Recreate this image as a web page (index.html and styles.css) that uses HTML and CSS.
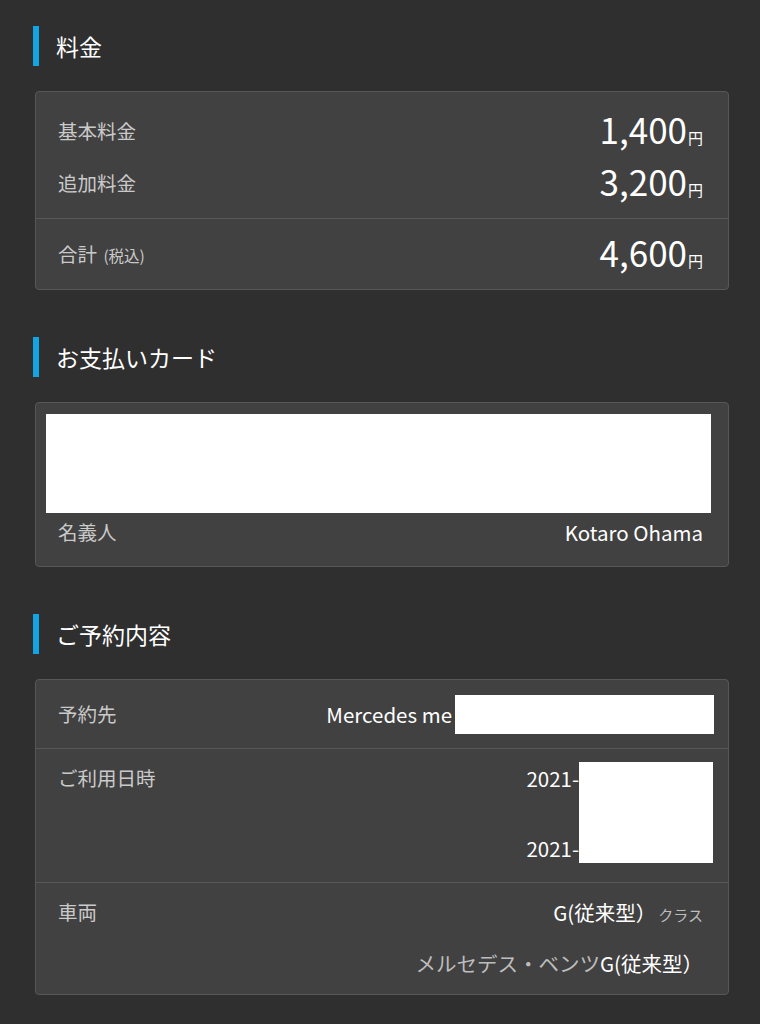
FILE: index.html
```html
<!DOCTYPE html>
<html lang="ja">
  <head>
    <meta charset="UTF-8">
    <title>ご予約内容</title>
    <link rel="stylesheet" href="styles.css">
  </head>
  <body>
    <div id="pbody">
      <div class="section">
        <h2 class="sec-title">料金</h2>
        <div class="card">
          <div class="fees">
            <div class="fee-row">
              <span class="label">基本料金</span>
              <span class="amount">1,400<small>円</small></span>
            </div>
            <div class="fee-row">
              <span class="label">追加料金</span>
              <span class="amount">3,200<small>円</small></span>
            </div>
          </div>
          <div class="fee-total">
            <span class="label">合計 <small>(税込)</small></span>
            <span class="amount">4,600<small>円</small></span>
          </div>
        </div>
      </div>

      <div class="section">
        <h2 class="sec-title">お支払いカード</h2>
        <div class="card card-pay">
          <div class="mask mask-card"></div>
          <div class="holder">
            <span class="label">名義人</span>
            <span class="value">Kotaro Ohama</span>
          </div>
        </div>
      </div>

      <div class="section">
        <h2 class="sec-title">ご予約内容</h2>
        <div class="card">
          <div class="row row-center">
            <span class="label">予約先</span>
            <div class="value-line">
              <span class="value">Mercedes me</span>
              <div class="mask mask-shop"></div>
            </div>
          </div>
          <div class="row row-date">
            <span class="label">ご利用日時</span>
            <div class="value-line">
              <div class="dates">
                <span class="value">2021-</span>
                <span class="value">2021-</span>
              </div>
              <div class="mask mask-date"></div>
            </div>
          </div>
          <div class="row row-car">
            <span class="label">車両</span>
            <div class="car">
              <div class="value">G(従来型）<span class="sub">クラス</span></div>
              <div class="value"><span class="sub">メルセデス・ベンツ</span>G(従来型）</div>
            </div>
          </div>
        </div>
      </div>
    </div>
  </body>
</html>
```
FILE: styles.css
```css
* {padding: 0; margin: 0; box-sizing: border-box;}
body {
  background: #2f2f2f;
  color: #fff;
  font-family: "Noto Sans CJK JP", "Noto Sans", sans-serif;
}
#pbody {
  padding: 26px 31px 30px 33px;
}
.section {
  margin-bottom: 47px;
}
.sec-title {
  border-left: 6px solid #13a4e6;
  height: 40px;
  line-height: 40px;
  padding-left: 17px;
  font-size: 23px;
  font-weight: normal;
  margin-bottom: 25px;
}
.card {
  margin-left: 2px;
  background: #414141;
  border: 1px solid #575757;
  border-radius: 4px;
}
.label {
  color: #cacaca;
  font-size: 19.5px;
  line-height: 28px;
}
.label small {
  font-size: 15.5px;
  margin-left: 2px;
}
.value {
  color: #fff;
  font-size: 20.5px;
  line-height: 28px;
}

/* fee card */
.fees {
  padding: 13px 25px 9px 22px;
}
.fee-row, .fee-total {
  display: flex;
  justify-content: space-between;
  align-items: center;
  height: 52px;
}
.fee-total {
  height: 71px;
  padding: 0 25px 0 22px;
  border-top: 1px solid #575757;
}
.amount {
  font-size: 35px;
  line-height: 1;
  margin-top: -6px;
}
.amount small {
  font-size: 15px;
  margin-left: 1px;
}

/* card */
.card-pay {
  padding: 11px 17px 15px 10px;
}
.mask {
  background: #fff;
}
.mask-card {
  height: 99px;
}
.holder {
  display: flex;
  justify-content: space-between;
  align-items: center;
  height: 38px;
  padding: 0 8px 0 12px;
}

/* reservation */
.row {
  display: flex;
  justify-content: space-between;
  align-items: flex-start;
  padding: 15px 25px 0 22px;
  border-top: 1px solid #575757;
}
.row:first-child {
  border-top: none;
}
.row-center {
  align-items: center;
  height: 68px;
  padding-top: 0;
}
.value-line {
  display: flex;
  align-items: center;
}
.mask-shop {
  width: 259px;
  height: 39px;
  margin-left: 3px;
  margin-right: -11px;
}
.row-date {
  height: 134px;
}
.row-date .value-line {
  margin-top: -2px;
}
.dates {
  display: flex;
  flex-direction: column;
  gap: 42px;
}
.mask-date {
  width: 134px;
  height: 101px;
  margin-right: -10px;
}
.row-car {
  height: 112px;
}
.car {
  text-align: right;
}
.car .value + .value {
  margin-top: 20px;
}
.sub {
  color: #bdbdbd;
}
.car .value:first-child .sub {
  font-size: 15px;
  margin-left: 2px;
}
```
